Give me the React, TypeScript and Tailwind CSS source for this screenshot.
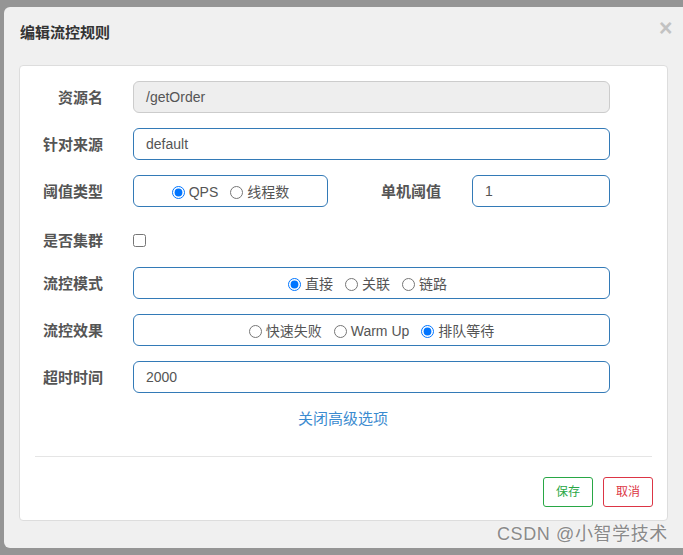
import React from "react";

const font = { fontFamily: '"Liberation Sans", "Noto Sans CJK SC", sans-serif' };

const Label = ({ children }: { children: React.ReactNode }) => (
  <div className="w-[83px] shrink-0 text-right text-[15px] font-bold text-[#555] mr-[30px] pt-[2px]">
    {children}
  </div>
);

const Radio = ({ label, checked }: { label: string; checked?: boolean }) => (
  <label className="flex items-center text-[14px] text-[#555] mr-[12px] last:mr-0">
    <input
      type="radio"
      defaultChecked={checked}
      className="w-[13px] h-[13px] mr-[4px] accent-[#0075ff]"
    />
    {label}
  </label>
);

const RadioBox = ({
  items,
  className = "",
}: {
  items: { label: string; checked?: boolean }[];
  className?: string;
}) => (
  <div
    className={`h-[32px] border border-[#337ab7] rounded-[6px] flex items-center justify-center pt-[2px] ${className}`}
  >
    {items.map((it) => (
      <Radio key={it.label} label={it.label} checked={it.checked} />
    ))}
  </div>
);

const TextBox = ({
  value,
  disabled,
  className = "",
}: {
  value: string;
  disabled?: boolean;
  className?: string;
}) => (
  <div
    className={`h-[32px] rounded-[6px] border flex items-center px-[12px] text-[14px] text-[#555] ${
      disabled ? "bg-[#eeeeee] border-[#cccccc]" : "bg-white border-[#337ab7]"
    } ${className}`}
  >
    {value}
  </div>
);

export default function App() {
  return (
    <div
      className="w-[683px] h-[555px] bg-[#959595] pt-[7px] pl-[4px] overflow-hidden"
      style={font}
    >
      <div className="relative w-[700px] h-[541px] bg-[#f0f0f0] rounded-[6px]">
        <div className="h-[58px] pt-[16px] pl-[16px] text-[15px] leading-[20px] font-bold text-[#333]">
          编辑流控规则
        </div>
        <span className="absolute left-[655px] top-[7px] text-[23px] font-bold text-[#c2c2c2] leading-[28px]">
          ×
        </span>

        <div className="ml-[15px] w-[649px] h-[456px] bg-white border border-[#dddddd] rounded-[4px] pt-[15px] flex flex-col">
          <div className="flex flex-col gap-[15px]">
            <div className="flex items-center">
              <Label>资源名</Label>
              <TextBox value="/getOrder" disabled className="w-[477px]" />
            </div>
            <div className="flex items-center">
              <Label>针对来源</Label>
              <TextBox value="default" className="w-[477px]" />
            </div>
            <div className="flex items-center">
              <Label>阈值类型</Label>
              <RadioBox
                className="w-[195px]"
                items={[{ label: "QPS", checked: true }, { label: "线程数" }]}
              />
              <div className="w-[113px] text-right text-[15px] font-bold text-[#555] mr-[31px] pt-[2px]">
                单机阈值
              </div>
              <TextBox value="1" className="w-[138px]" />
            </div>
            <div className="flex items-center h-[30px] pt-[7px]">
              <Label>是否集群</Label>
              <input type="checkbox" className="w-[13px] h-[13px]" />
            </div>
            <div className="flex items-center">
              <Label>流控模式</Label>
              <RadioBox
                className="w-[477px] pr-[8px]"
                items={[
                  { label: "直接", checked: true },
                  { label: "关联" },
                  { label: "链路" },
                ]}
              />
            </div>
            <div className="flex items-center">
              <Label>流控效果</Label>
              <RadioBox
                className="w-[477px]"
                items={[
                  { label: "快速失败" },
                  { label: "Warm Up" },
                  { label: "排队等待", checked: true },
                ]}
              />
            </div>
            <div className="flex items-center">
              <Label>超时时间</Label>
              <TextBox value="2000" className="w-[477px]" />
            </div>
          </div>

          <div className="mt-[15px] pl-[278px] text-[15px] leading-[22px] text-[#3b8bd0]">
            关闭高级选项
          </div>

          <div className="mt-[26px] mx-[15px] border-t border-[#e5e5e5]" />

          <div className="mt-[20px] mr-[14px] flex justify-end gap-[10px]">
            <button className="w-[50px] h-[30px] border border-[#28a745] rounded-[3px] text-[12px] text-[#28a745] bg-white">
              保存
            </button>
            <button className="w-[50px] h-[30px] border border-[#dc3545] rounded-[3px] text-[12px] text-[#dc3545] bg-white">
              取消
            </button>
          </div>
        </div>

        <div
          className="absolute left-[493px] top-[516px] text-[18px] leading-[22px] text-[#8a8a8a] tracking-[0.6px]"
          style={{ textShadow: "0 0 2px #fff" }}
        >
          CSDN @小智学技术
        </div>
      </div>
    </div>
  );
}
